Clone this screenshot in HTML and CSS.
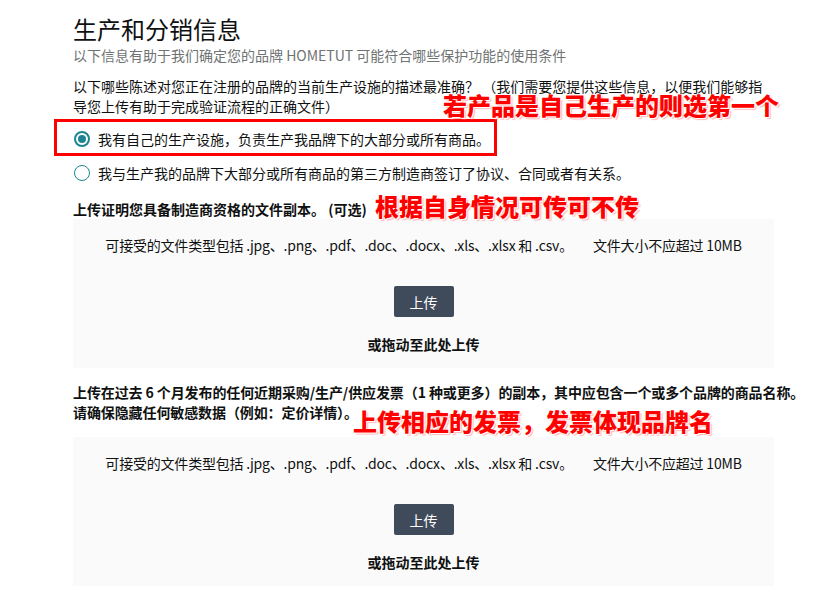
FILE: index.html
```html
<!DOCTYPE html>
<html lang="zh-CN">
<head>
    <meta charset="UTF-8">
    <meta name="viewport" content="width=device-width, initial-scale=1.0">
    <title>生产和分销信息</title>
    <link rel="stylesheet" href="styles.css">
</head>
<body>

    <div class="page">
        <h1 class="title">生产和分销信息</h1>
        <p class="subtitle">以下信息有助于我们确定您的品牌 HOMETUT 可能符合哪些保护功能的使用条件</p>

        <p class="question">以下哪些陈述对您正在注册的品牌的当前生产设施的描述最准确？ （我们需要您提供这些信息，以便我们能够指导您上传有助于完成验证流程的正确文件）</p>

        <div class="options">
            <label class="option highlighted">
                <span class="radio checked"></span>
                <span>我有自己的生产设施，负责生产我品牌下的大部分或所有商品。</span>
            </label>
            <label class="option">
                <span class="radio"></span>
                <span>我与生产我的品牌下大部分或所有商品的第三方制造商签订了协议、合同或者有关系。</span>
            </label>
        </div>

        <p class="upload-label">上传证明您具备制造商资格的文件副本。 (可选)</p>
        <div class="dropzone">
            <p class="types"><span>可接受的文件类型包括 .jpg、.png、.pdf、.doc、.docx、.xls、.xlsx 和 .csv。</span><span class="size">文件大小不应超过 10MB</span></p>
            <button class="upload-btn">上传</button>
            <p class="drag">或拖动至此处上传</p>
        </div>

        <p class="upload-label second">上传在过去 6 个月发布的任何近期采购/生产/供应发票（1 种或更多）的副本，其中应包含一个或多个品牌的商品名称。<br>请确保隐藏任何敏感数据（例如：定价详情）。</p>
        <div class="dropzone">
            <p class="types"><span>可接受的文件类型包括 .jpg、.png、.pdf、.doc、.docx、.xls、.xlsx 和 .csv。</span><span class="size">文件大小不应超过 10MB</span></p>
            <button class="upload-btn">上传</button>
            <p class="drag">或拖动至此处上传</p>
        </div>

        <!-- annotations drawn over the page -->
        <span class="note note-1">若产品是自己生产的则选第一个</span>
        <span class="note note-2">根据自身情况可传可不传</span>
        <span class="note note-3">上传相应的发票，发票体现品牌名</span>
    </div>

</body>
</html>
```

FILE: styles.css
```css
body {
    margin: 0;
    background-color: #fff;
    font-family: "Noto Sans CJK SC", "Noto Sans", sans-serif;
    color: #0f1111;
    font-size: 14px;
    line-height: 20px;
}

.page {
    position: relative;
    width: 701px;
    padding: 13px 0 0 73px;
}

p {
    margin: 0;
}

.title {
    margin: 0;
    font-size: 24px;
    line-height: 32px;
    font-weight: 400;
}

.subtitle {
    color: #6f7373;
}

.question {
    margin-top: 11px;
}

.options {
    display: flex;
    flex-direction: column;
    gap: 14px;
    margin-top: 13px;
}

.option {
    position: relative;
    display: flex;
    align-items: center;
    gap: 8px;
    padding-left: 1px;
}

.option.highlighted::before {
    content: "";
    position: absolute;
    left: -19px;
    top: -10px;
    width: 437px;
    height: 31px;
    border: 3px solid #f00;
}

.radio {
    width: 14px;
    height: 14px;
    border: 1px solid #1d8592;
    border-radius: 50%;
    display: flex;
    align-items: center;
    justify-content: center;
    flex-shrink: 0;
}

.radio.checked {
    border-width: 2px;
    width: 12px;
    height: 12px;
}

.radio.checked::after {
    content: "";
    width: 8px;
    height: 8px;
    border-radius: 50%;
    background-color: #1d8592;
}

.upload-label {
    margin-top: 16px;
    font-weight: 700;
}

.upload-label.second {
    margin-top: 14px;
    white-space: nowrap;
    letter-spacing: -0.1px;
}

.dropzone {
    background-color: #fafafa;
    display: flex;
    flex-direction: column;
    align-items: center;
    padding: 16px 0 14px;
}

.upload-label.second + .dropzone {
    margin-top: 15px;
}

.types {
    letter-spacing: -0.2px;
}

.types .size {
    margin-left: 20px;
}

.upload-btn {
    margin-top: 31px;
    width: 60px;
    height: 31px;
    border: none;
    border-radius: 2px;
    background-color: #3f4b5a;
    color: #fff;
    font-family: inherit;
    font-size: 14px;
}

.drag {
    margin-top: 17px;
    font-weight: 700;
}

.note {
    position: absolute;
    color: #f00;
    font-size: 24px;
    line-height: 26px;
    font-weight: 900;
    white-space: nowrap;
    text-shadow: 1px 1px 0 #fff, 2px 2px 1px rgba(255, 120, 120, 0.5);
}

.note-1 {
    left: 443px;
    top: 92px;
}

.note-2 {
    left: 375px;
    top: 193px;
}

.note-3 {
    left: 353px;
    top: 408px;
}
```
